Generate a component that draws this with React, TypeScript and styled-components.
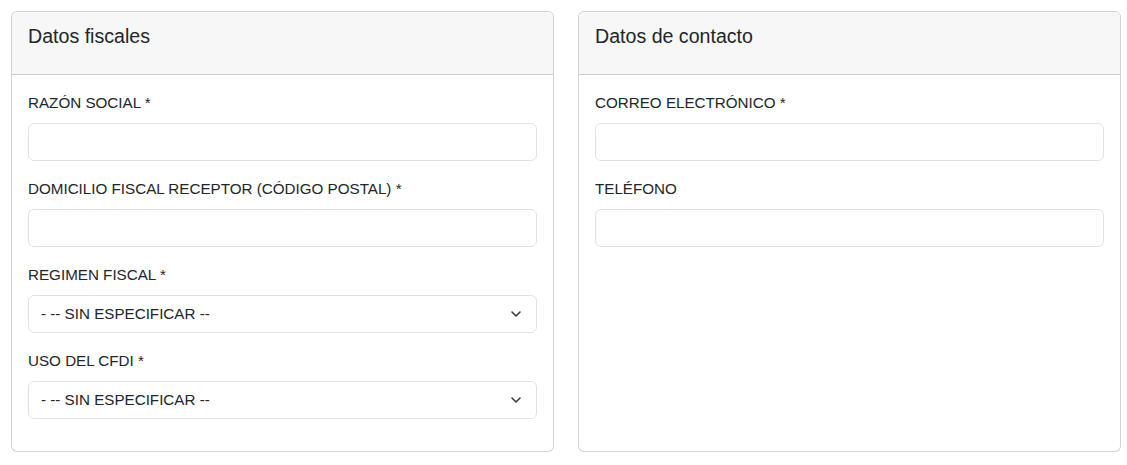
import React from "react";
import styled, { createGlobalStyle } from "styled-components";

const GlobalStyle = createGlobalStyle`
  html, body { margin: 0; padding: 0; background: #fff; }
  body {
    font-family: "Liberation Sans", Arial, Helvetica, sans-serif;
    color: #212529;
    font-size: 15.2px;
    line-height: 1.5;
  }
  * { box-sizing: border-box; }
`;

const Page = styled.div`
  display: grid;
  grid-template-columns: 1fr 1fr;
  gap: 24px;
  padding: 11px 6px 0 11px;
  align-items: stretch;
`;

const Card = styled.section`
  display: flex;
  flex-direction: column;
  border: 1px solid rgba(0, 0, 0, 0.175);
  border-radius: 6px;
  background: #fff;
  overflow: hidden;
`;

const CardHeader = styled.div`
  background: #f7f7f7;
  border-bottom: 1px solid rgba(0, 0, 0, 0.175);
  padding: 12px 16px 18px;
`;

const CardTitle = styled.h5`
  margin: 0 0 8px;
  font-size: 19.6px;
  font-weight: 400;
  line-height: 24px;
`;

const CardBody = styled.div`
  flex: 1;
  padding: 16px 16px 32px;
  display: flex;
  flex-direction: column;
  gap: 16px;
`;

const Field = styled.div`
  display: flex;
  flex-direction: column;
`;

const Label = styled.label`
  display: block;
  font-size: 15.2px;
  line-height: 24px;
  margin-bottom: 8px;
`;

const controlBase = `
  display: block;
  width: 100%;
  height: 38px;
  padding: 6px 12px;
  font-family: "Liberation Sans", Arial, Helvetica, sans-serif;
  font-size: 15.2px;
  line-height: 24px;
  color: #212529;
  background-color: #fff;
  border: 1px solid #dee2e6;
  border-radius: 6px;
  outline: none;
`;

const Input = styled.input`
  ${controlBase}
`;

const SelectWrap = styled.div`
  position: relative;
`;

const Select = styled.select`
  ${controlBase}
  appearance: none;
  -webkit-appearance: none;
  padding-right: 36px;
`;

const Chevron = styled.svg`
  position: absolute;
  right: 16px;
  top: 16px;
  width: 10px;
  height: 6px;
  overflow: visible;
  pointer-events: none;
`;

const ChevronIcon = () => (
  <Chevron viewBox="0 0 10 6">
    <path
      d="M1 1 5 5 9 1"
      fill="none"
      stroke="#343a40"
      strokeWidth="1.6"
      strokeLinecap="round"
      strokeLinejoin="round"
    />
  </Chevron>
);

const SelectField = () => (
  <SelectWrap>
    <Select defaultValue="">
      <option value="">- -- SIN ESPECIFICAR --</option>
    </Select>
    <ChevronIcon />
  </SelectWrap>
);

export default function App() {
  return (
    <>
      <GlobalStyle />
      <Page>
        <Card>
          <CardHeader>
            <CardTitle>Datos fiscales</CardTitle>
          </CardHeader>
          <CardBody>
            <Field>
              <Label>RAZÓN SOCIAL *</Label>
              <Input type="text" />
            </Field>
            <Field>
              <Label>DOMICILIO FISCAL RECEPTOR (CÓDIGO POSTAL) *</Label>
              <Input type="text" />
            </Field>
            <Field>
              <Label>REGIMEN FISCAL *</Label>
              <SelectField />
            </Field>
            <Field>
              <Label>USO DEL CFDI *</Label>
              <SelectField />
            </Field>
          </CardBody>
        </Card>
        <Card>
          <CardHeader>
            <CardTitle>Datos de contacto</CardTitle>
          </CardHeader>
          <CardBody>
            <Field>
              <Label>CORREO ELECTRÓNICO *</Label>
              <Input type="email" />
            </Field>
            <Field>
              <Label>TELÉFONO</Label>
              <Input type="tel" />
            </Field>
          </CardBody>
        </Card>
      </Page>
    </>
  );
}
